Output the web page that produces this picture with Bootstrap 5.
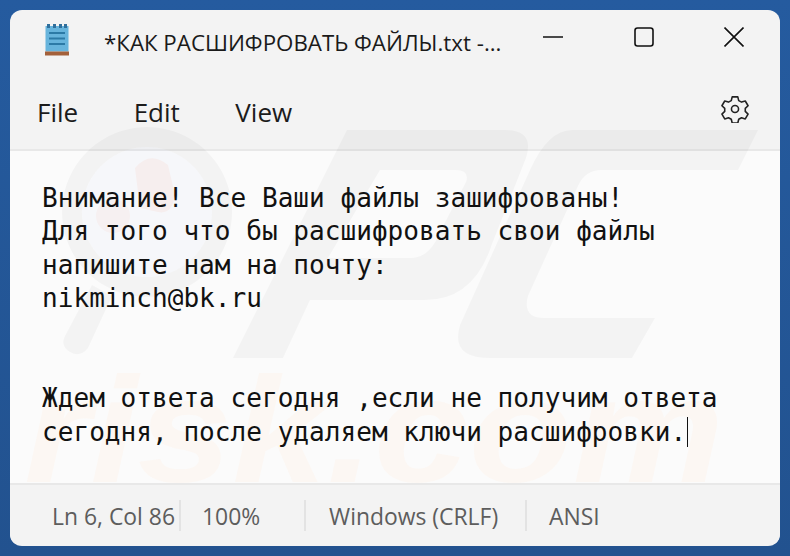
<!DOCTYPE html>
<html lang="ru">

<head>
    <meta charset="UTF-8">
    <meta name="viewport" content="width=device-width, initial-scale=1.0">
    <title>Блокнот</title>
    <link href="https://cdn.jsdelivr.net/npm/bootstrap@5.3.3/dist/css/bootstrap.min.css" rel="stylesheet">
    <style>
        html, body { height: 100%; }
        body {
            background: linear-gradient(#255b9f, #22528f);
            font-family: "Open Sans", "Noto Sans", sans-serif;
            overflow: hidden;
        }
        .desk { height: 100%; padding: 10px; }
        .np-window {
            height: 100%;
            border-radius: 12px;
            overflow: hidden;
            background: #f3f3f3;
            position: relative;
        }
        .np-title { height: 66px; padding: 0 36px 0 35px; }
        .np-title-icon { margin-top: -7px; }
        .np-title-text { font-size: 22.3px; color: #1a1a1a; margin-left: 35px; width: 437px; white-space: nowrap; }
        .np-winbtns { margin-left: auto; gap: 70.5px; margin-top: -13px; }
        .np-menu { height: 73px; padding: 0 31px 0 27px; gap: 55.5px; font-size: 26px; color: #1b1b1b; }
        .np-gear { margin-left: auto; margin-top: -7px; }
        .np-body {
            height: 336px;
            background: #fbfbfb;
            border-top: 2px solid #e8e8e8;
            border-bottom: 2px solid #e8e8e8;
            padding: 31px 32px 0;
        }
        .np-text {
            font-family: "DejaVu Sans Mono", monospace;
            font-size: 26.1px;
            line-height: 33.4px;
            color: #111;
            white-space: pre;
            margin: 0;
            position: relative;
            z-index: 1;
        }
        .np-caret { border-left: 1px solid #111; margin-left: 1px; }
        .np-mark { position: absolute; left: -10px; top: -10px; pointer-events: none; }
        .np-mark-word { font-family: "Liberation Sans", sans-serif; font-weight: 700; font-style: italic; font-size: 150px; fill: #fcf7f3; }
        .np-status { height: 61px; padding: 2px 0 0 42px; font-size: 22.9px; color: #5d5d5d; position: relative; z-index: 1; background: #f3f3f3; border-top: 2px solid #e8e8e8; margin-top: -2px; }
        .np-cell { height: 31px; padding-top: 4px; display: flex; align-items: center; border-right: 2px solid #e3e3e3; white-space: nowrap; }
        .np-cell-a { width: 129px; }
        .np-cell-b { width: 125px; padding-left: 21px; }
        .np-cell-c { width: 221px; padding-left: 23px; }
        .np-cell-d { padding-left: 22px; border-right: 0; }
    </style>
</head>

<body>
    <div class="desk">
        <div class="np-window d-flex flex-column">
            <div class="np-title d-flex align-items-center">
                <svg class="np-title-icon" width="24" height="32" viewBox="0 0 24 32">
                    <rect x="0.500" y="2" width="23" height="25.500" fill="#67b4dc"/>
                    <rect x="0" y="27.500" width="24" height="4" fill="#a3603a"/>
                    <g fill="#2f6f9c"><rect x="2" y="0" width="3" height="4"/><rect x="8" y="0" width="3" height="4"/><rect x="14" y="0" width="3" height="4"/><rect x="19" y="0" width="3" height="4"/></g>
                    <g fill="#2c7aa6"><rect x="4" y="8" width="16" height="2"/><rect x="4" y="13.500" width="16" height="2"/><rect x="4" y="19" width="16" height="2"/></g>
                </svg>
                <span class="np-title-text">*КАК РАСШИФРОВАТЬ ФАЙЛЫ.txt -...</span>
                <div class="np-winbtns d-flex align-items-center">
                    <svg width="20" height="20" viewBox="0 0 20 20"><path d="M0 10H20" stroke="#111" stroke-width="1.6"/></svg>
                    <svg width="20" height="20" viewBox="0 0 20 20"><rect x="1" y="1" width="18" height="18" rx="2.5" fill="none" stroke="#111" stroke-width="1.6"/></svg>
                    <svg width="20" height="20" viewBox="0 0 20 20"><path d="M0.5 0.5L19.5 19.5M19.5 0.5L0.5 19.5" stroke="#111" stroke-width="1.6"/></svg>
                </div>
            </div>
            <div class="np-menu d-flex align-items-center">
                <span>File</span><span>Edit</span><span>View</span>
                <svg class="np-gear" width="28" height="28" viewBox="0 0 30 30"><path d="M12 2h6l1 4 3 1.600 4-1.200 3 5.100-3 2.900v3.200l3 2.900-3 5.100-4-1.200-3 1.600-1 4h-6l-1-4-3-1.600-4 1.200-3-5.100 3-2.900v-3.200l-3-2.900 3-5.100 4 1.200 3-1.600z" fill="none" stroke="#222" stroke-width="1.7" stroke-linejoin="round"/><circle cx="15" cy="15" r="3.800" fill="none" stroke="#222" stroke-width="1.700"/></svg>
            </div>
            <div class="np-body">
                <pre class="np-text">Внимание! Все Ваши файлы зашифрованы!
Для того что бы расшифровать свои файлы
напишите нам на почту:
nikminch@bk.ru


Ждем ответа сегодня ,если не получим ответа
сегодня, после удаляем ключи расшифровки.<span class="np-caret"></span></pre>
            </div>
            <div class="np-status d-flex align-items-center">
                <span class="np-cell np-cell-a">Ln 6, Col 86</span>
                <span class="np-cell np-cell-b">100%</span>
                <span class="np-cell np-cell-c">Windows (CRLF)</span>
                <span class="np-cell np-cell-d">ANSI</span>
            </div>
            <!-- водяной знак -->
            <svg class="np-mark" width="790" height="556" viewBox="0 0 790 556">
                <text class="np-mark-word" x="24" y="482" textLength="700" lengthAdjust="spacingAndGlyphs">risk.com</text>
                <circle cx="147" cy="212" r="65" fill="#3c64c8" fill-opacity="0.025"/>
                <g fill="#000" fill-opacity="0.03">
                    <path fill-rule="evenodd" d="M147 127a85 85 0 1 0 .1 0zM147 147a65 65 0 1 1-.1 0z"/>
                    <path d="M92 285L112 296L88 348Q80 358 70 352Q60 346 65 336z"/>
                    <path fill-rule="evenodd" d="M347 130H505Q535 130 526 158L492 244Q474 300 425 300H310L283 358H233z M380 170L328 258H410Q430 258 440 232L466 182Q470 170 455 170z"/>
                    <path d="M572 130H758L738 170H602Q585 170 578 186L528 296Q522 318 545 318H655L632 358H490Q450 358 460 325L530 170Q548 130 572 130z"/>
                </g>
                <path d="M135 168Q150 150 168 165L175 195Q172 215 158 212L140 208z" fill="#f8541c" fill-opacity="0.05"/>
                <circle cx="113" cy="216" r="17" fill="#f8541c" fill-opacity="0.04"/>
            </svg>
        </div>
    </div>
    <script src="https://cdn.jsdelivr.net/npm/bootstrap@5.3.3/dist/js/bootstrap.bundle.min.js"></script>
</body>

</html>
